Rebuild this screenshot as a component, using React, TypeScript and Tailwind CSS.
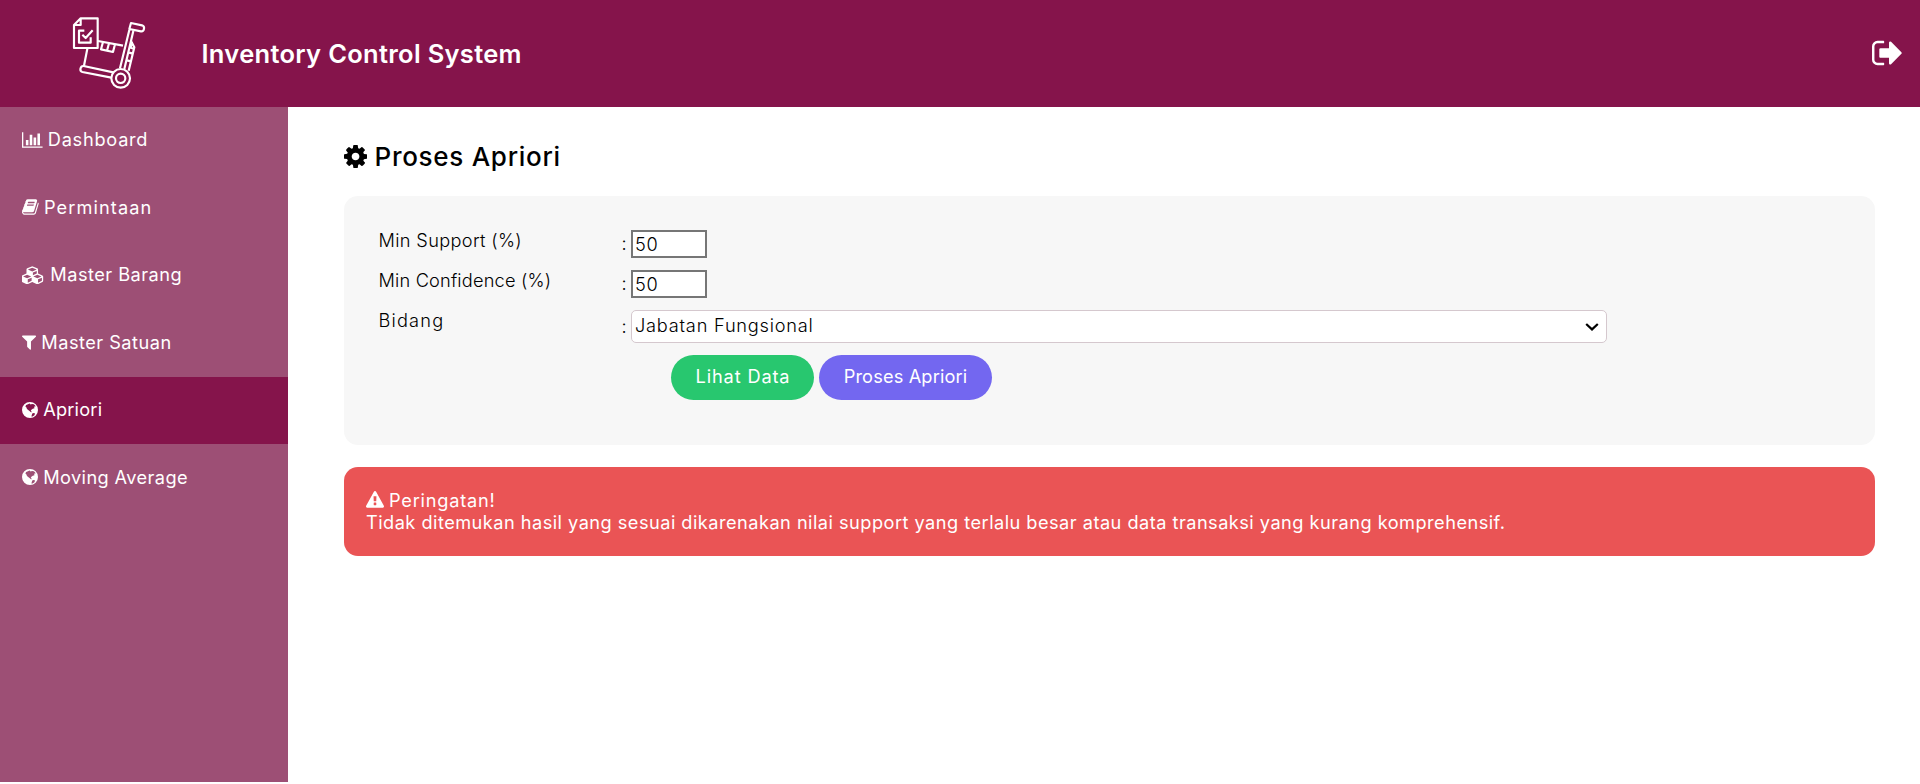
import type { ReactNode } from "react";

type GlyphProps = { box: string; d: string; className: string };

function Glyph({ box, d, className }: GlyphProps) {
  return (
    <svg viewBox={box} className={className} fill="currentColor" fillRule="evenodd" aria-hidden="true">
      <path d={d} />
    </svg>
  );
}

const CHART =
  "M640 896v512h-256v-512h256zm384-512v1024h-256v-1024h256zm1024 1152v128h-2048v-1536h128v1408h1920zm-640-896v768h-256v-768h256zm384-384v1152h-256v-1152h256z";
const BOOK =
  "M1703 478q40 57 18 129l-275 906q-19 64-76.500 107.500t-122.500 43.500h-923q-77 0-148.500-53.500t-99.500-131.500q-24-67-2-127 0-4 3-27t4-37q1-8-3-21.500t-3-19.500q2-11 8-21t16.500-23.500 16.500-23.500q23-38 45-91.500t30-91.500q3-10 .5-30t-.5-28q3-11 17-28t17-23q21-36 42-92t25-90q1-9-2.500-32t.5-28q4-13 22-30.500t22-22.500q19-26 42.500-84.500t27.500-96.500q1-8-3-25.500t-2-26.500q2-8 9-18t18-23 17-21q8-12 16.500-30.500t15-35 16-36 19.500-32 26.500-23.500 36-11.500 47.500 5.500l-1 3q38-9 51-9h761q74 0 114 56t18 130l-274 906q-36 119-71.500 153.500t-128.500 34.500h-869q-27 0-38 15-11 16-1 43 24 70 144 70h923q29 0 56-15.500t35-41.500l300-987q7-22 5-57 38 15 59 43zm-1064 2q-4 13 2 22.500t20 9.500h608q13 0 25.500-9.500t16.500-22.500l21-64q4-13-2-22.500t-20-9.500h-608q-13 0-25.500 9.500t-16.500 22.500zm-83 256q-4 13 2 22.500t20 9.500h608q13 0 25.500-9.500t16.500-22.500l21-64q4-13-2-22.500t-20-9.500h-608q-13 0-25.500 9.500t-16.500 22.500z";
const CUBES =
  "M576 1665l384-192v-314l-384 164v342zm-64-454l404-173-404-173-404 173zm1088 454l384-192v-314l-384 164v342zm-64-454l404-173-404-173-404 173zm-448-293l384-165v-266l-384 164v267zm-64-379l441-189-441-189-441 189zm1088 518v416q0 36-19 67t-52 47l-448 224q-25 14-57 14t-57-14l-448-224q-5-2-7-4-2 2-7 4l-448 224q-25 14-57 14t-57-14l-448-224q-33-16-52-47t-19-67v-416q0-38 21.500-70t56.500-48l434-186v-400q0-38 21.500-70t56.500-48l448-192q23-10 50-10t50 10l448 192q35 16 56.500 48t21.500 70v400l434 186q36 16 57 48t21 70z";
const FUNNEL =
  "M1595 295q17 41-14 70l-493 493v742q0 42-39 59-13 5-25 5-27 0-45-19l-256-256q-19-19-19-45v-486l-493-493q-31-29-14-70 17-39 59-39h1280q42 0 59 39z";
const GLOBE =
  "M8 0a8 8 0 1 0 0 16A8 8 0 0 0 8 0ZM4.1 2.9L6 2.2L7.6 1.6L8.6 2.6L10 2L11.8 2.2L13.2 3.6L13.4 4.8L12 4.6L12.5 6.3L10.8 6.8L9.4 7.8L8.8 8.8L9.6 9.6L9.2 10.4L7.8 9.2L6.2 8L5 7L4.3 5.2L3.4 4.6ZM10.2 11.4L11.6 10.9L13.1 11.6L12.4 13.2L10.6 14.5L9.4 14.6L9.8 13Z";
const COG =
  "M1152 896q0-106-75-181t-181-75-181 75-75 181 75 181 181 75 181-75 75-181zm512-109v222q0 12-8 23t-20 13l-185 28q-19 54-39 91 35 50 107 138 10 12 10 25t-9 23q-27 37-99 108t-94 71q-12 0-26-9l-138-108q-44 23-91 38-16 136-29 186-7 28-36 28h-222q-14 0-24.500-8.500t-11.500-21.500l-28-184q-49-16-90-37l-141 107q-10 9-25 9-14 0-25-11-126-114-165-168-7-10-7-23 0-12 8-23 15-21 51-66.500t54-70.500q-27-50-41-99l-183-27q-13-2-21-12.500t-8-23.500v-222q0-12 8-23t19-13l186-28q14-46 39-92-40-57-107-138-10-12-10-24 0-10 9-23 26-36 98.500-107.500t94.500-71.500q13 0 26 10l138 107q44-23 91-38 16-136 29-186 7-28 36-28h222q14 0 24.500 8.500t11.500 21.500l28 184q49 16 90 37l142-107q9-9 24-9 13 0 25 10 129 119 165 170 7 8 7 22 0 12-8 23-15 21-51 66.500t-54 70.500q26 50 41 98l183 28q13 2 21 12.500t8 23.500z";
const SIGN_OUT =
  "M704 1440q0 4 1 20t.5 26.500-3 23.500-10 19.500-20.500 6.500h-320q-119 0-203.500-84.500t-84.500-203.500v-704q0-119 84.500-203.500t203.500-84.500h320q13 0 22.500 9.500t9.500 22.500q0 4 1 20t.5 26.500-3 23.500-10 19.500-20.500 6.500h-320q-66 0-113 47t-47 113v704q0 66 47 113t113 47h312l11.500 1 11.500 3 8 5.500 7 9 2 13.500zm928-544q0 26-19 45l-544 544q-19 19-45 19t-45-19-19-45v-288h-448q-26 0-45-19t-19-45v-384q0-26 19-45t45-19h448v-288q0-26 19-45t45-19 45 19l544 544q19 19 19 45z";
const WARNING =
  "M1024 1375v-190q0-14-9.500-23.500t-22.500-9.500h-192q-13 0-22.500 9.500t-9.500 23.500v190q0 14 9.500 23.500t22.500 9.500h192q13 0 22.500-9.500t9.500-23.500zm-2-374l18-459q0-12-10-19-13-11-24-11h-220q-11 0-24 11-10 7-10 21l17 457q0 10 10 16.500t24 6.500h185q14 0 23.500-6.500t10.500-16.500zm-14-934l768 1408q35 63-2 126-17 29-46.500 46t-63.500 17h-1536q-34 0-63.500-17t-46.500-46q-37-63-2-126l768-1408q17-31 47-49t65-18 65 18 47 49z";

function Logo() {
  return (
    <svg
      viewBox="0 0 300 285"
      className="mb-[2px] h-[95px] w-[100px]"
      fill="none"
      stroke="#fff"
      strokeWidth="6.5"
      strokeLinejoin="round"
      aria-hidden="true"
    >
      <path d="M62 40H113V129H42V60L62 40V60H42" />
      <path d="M73 77H57V113H92V97M67 89L77 99L98 76" />
      <path d="M114 108L189 122M129 111L123 133L159 141L165 118M147 115L141 137M82 131L72 182" />
      <path d="M208 75L180 190M220 78L193 192M213 54L246 61C256 64 253 80 243 79L208 72Z" />
      <path d="M213 108L223 127L206 197M207 143L219 146M201 166L213 169M216 110L212 128L222 131" />
      <path d="M160 202L71 183C61 182 57 198 67 201L154 218" />
      <circle cx="182" cy="220" r="28" />
      <circle cx="182" cy="220" r="14" />
    </svg>
  );
}

const menu = [
  { label: "Dashboard", d: CHART, box: "0 0 2048 1792", icon: "h-[18px] w-[20.6px]", track: "tracking-[0.74px]" },
  { label: "Permintaan", d: BOOK, box: "64 0 1664 1792", icon: "h-[18px] w-[16.7px]", track: "tracking-[1.1px]" },
  { label: "Master Barang", d: CUBES, box: "0 0 2304 1792", icon: "h-[18px] w-[23.1px]", track: "tracking-[0.48px]" },
  { label: "Master Satuan", d: FUNNEL, box: "192 0 1408 1792", icon: "h-[18px] w-[14.1px]", track: "tracking-[0.48px]" },
  { label: "Apriori", d: GLOBE, box: "0 0 16 16", icon: "size-[16px]", track: "tracking-[0.2px]", active: true },
  { label: "Moving Average", d: GLOBE, box: "0 0 16 16", icon: "size-[16px]", track: "tracking-[0.4px]" },
];

function Row({ label, track, children }: { label: string; track: string; children: ReactNode }) {
  return (
    <div className="flex items-start">
      <span className={`-mt-px w-[243px] leading-[22px] ${track}`}>{label}</span>
      <div className="flex items-center">
        <span className="w-[9.5px]">:</span>
        {children}
      </div>
    </div>
  );
}

export default function App() {
  return (
    <div className="flex h-[784px] flex-col bg-white font-['Inter',sans-serif] text-[18.2px] text-black">
      <header className="flex h-[107px] items-center bg-[#85144b] pr-[16px] pl-[60px] text-white">
        <Logo />
        <h1 className="ml-[41.5px] pt-[2px] text-[25.5px] font-semibold tracking-[0.3px]">Inventory Control System</h1>
        <a className="ml-auto pb-[2px]">
          <Glyph box="64 0 1664 1792" d={SIGN_OUT} className="h-[34px] w-[31.6px]" />
        </a>
      </header>

      <div className="flex h-[675px]">
        <nav className="w-[288px] bg-[#9d4f75] text-white">
          {menu.map((m) => (
            <a
              key={m.label}
              className={`mb-[0.5px] flex h-[67px] items-center gap-[5.2px] pb-[1.4px] pl-[22px] ${m.active ? "bg-[#85144b]" : ""}`}
            >
              <Glyph box={m.box} d={m.d} className={m.icon} />
              <span className={m.track}>{m.label}</span>
            </a>
          ))}
        </nav>

        <main className="flex-1 pr-[45px] pl-[56px]">
          <h2 className="flex h-[89px] items-center gap-[7.4px] pt-[9.5px] text-[26px] font-medium tracking-[0.72px]">
            <Glyph box="128 0 1536 1792" d={COG} className="h-[27px] w-[23.1px]" />
            Proses Apriori
          </h2>

          <section className="flex h-[249px] flex-col gap-3 rounded-[14px] bg-[#f7f7f7] pt-[34px] pl-[34.5px] font-light">
            <Row label="Min Support (%)" track="tracking-[0.34px]">
              <input
                defaultValue="50"
                className="h-[28px] w-[76px] border-2 border-[#767676] bg-white pl-[2px] tracking-[0.8px] outline-none"
              />
            </Row>
            <Row label="Min Confidence (%)" track="tracking-[0.18px]">
              <input
                defaultValue="50"
                className="h-[28px] w-[76px] border-2 border-[#767676] bg-white pl-[2px] tracking-[0.8px] outline-none"
              />
            </Row>
            <Row label="Bidang" track="tracking-[1.2px]">
              <div className="flex h-[33px] w-[976px] items-center justify-between rounded-[5px] border border-[#d5c8ce] bg-white pr-[7px] pl-[3px]">
                <span className="pb-[1.5px] tracking-[0.78px]">Jabatan Fungsional</span>
                <svg viewBox="0 0 14 10" className="h-[10px] w-[14px]" fill="none" stroke="#000" strokeWidth="2.2" aria-hidden="true">
                  <path d="M1.2 2L7 7.4L12.8 2" />
                </svg>
              </div>
            </Row>
            <div className="flex gap-[5px] pl-[292.5px] font-normal text-white">
              <button className="h-[45px] w-[143px] rounded-full bg-[#28c76f] pb-[1.5px] pl-[1px] tracking-[0.85px]">
                Lihat Data
              </button>
              <button className="h-[45px] w-[173px] rounded-full bg-[#7367f0] pb-[1.5px] tracking-[0.15px]">
                Proses Apriori
              </button>
            </div>
          </section>

          <section className="mt-[22px] h-[89px] rounded-[14px] bg-[#ea5455] pt-[21.5px] pl-[22px] leading-[22px] text-white">
            <p className="flex items-center gap-[5px]">
              <Glyph box="0 0 1792 1792" d={WARNING} className="size-[18px]" />
              <span className="tracking-[0.78px]">Peringatan!</span>
            </p>
            <p className="whitespace-nowrap tracking-[0.47px]">
              Tidak ditemukan hasil yang sesuai dikarenakan nilai support yang terlalu besar atau data transaksi yang kurang
              komprehensif.
            </p>
          </section>
        </main>
      </div>
    </div>
  );
}
